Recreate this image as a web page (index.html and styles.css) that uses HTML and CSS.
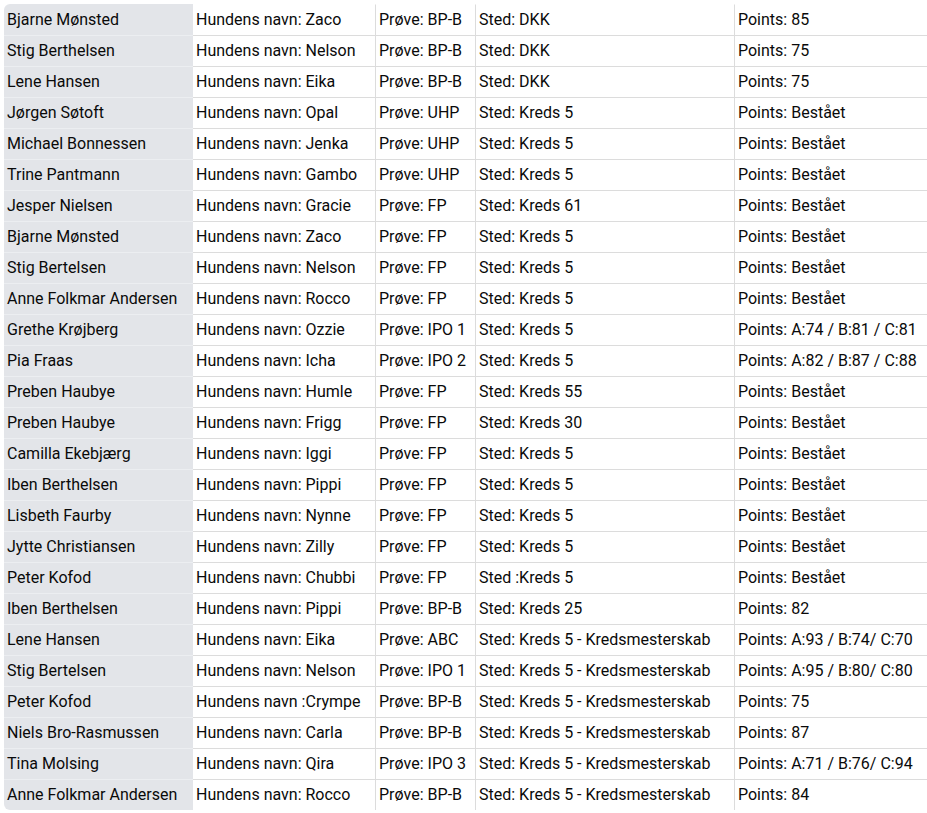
FILE: index.html
```html
<!DOCTYPE html>
<html lang="da">
<head>
<meta charset="utf-8">
<link rel="stylesheet" href="styles.css">
</head>
<body>
<table class="results">
<tbody>
<tr><td class="name">Bjarne Mønsted</td><td>Hundens navn: Zaco</td><td>Prøve: BP-B</td><td>Sted: DKK</td><td>Points: 85</td></tr>
<tr><td class="name">Stig Berthelsen</td><td>Hundens navn: Nelson</td><td>Prøve: BP-B</td><td>Sted: DKK</td><td>Points: 75</td></tr>
<tr><td class="name">Lene Hansen</td><td>Hundens navn: Eika</td><td>Prøve: BP-B</td><td>Sted: DKK</td><td>Points: 75</td></tr>
<tr><td class="name">Jørgen Søtoft</td><td>Hundens navn: Opal</td><td>Prøve: UHP</td><td>Sted: Kreds 5</td><td>Points: Bestået</td></tr>
<tr><td class="name">Michael Bonnessen</td><td>Hundens navn: Jenka</td><td>Prøve: UHP</td><td>Sted: Kreds 5</td><td>Points: Bestået</td></tr>
<tr><td class="name">Trine Pantmann</td><td>Hundens navn: Gambo</td><td>Prøve: UHP</td><td>Sted: Kreds 5</td><td>Points: Bestået</td></tr>
<tr><td class="name">Jesper Nielsen</td><td>Hundens navn: Gracie</td><td>Prøve: FP</td><td>Sted: Kreds 61</td><td>Points: Bestået</td></tr>
<tr><td class="name">Bjarne Mønsted</td><td>Hundens navn: Zaco</td><td>Prøve: FP</td><td>Sted: Kreds 5</td><td>Points: Bestået</td></tr>
<tr><td class="name">Stig Bertelsen</td><td>Hundens navn: Nelson</td><td>Prøve: FP</td><td>Sted: Kreds 5</td><td>Points: Bestået</td></tr>
<tr><td class="name">Anne Folkmar Andersen</td><td>Hundens navn: Rocco</td><td>Prøve: FP</td><td>Sted: Kreds 5</td><td>Points: Bestået</td></tr>
<tr><td class="name">Grethe Krøjberg</td><td>Hundens navn: Ozzie</td><td>Prøve: IPO 1</td><td>Sted: Kreds 5</td><td>Points: A:74 / B:81 / C:81</td></tr>
<tr><td class="name">Pia Fraas</td><td>Hundens navn: Icha</td><td>Prøve: IPO 2</td><td>Sted: Kreds 5</td><td>Points: A:82 / B:87 / C:88</td></tr>
<tr><td class="name">Preben Haubye</td><td>Hundens navn: Humle</td><td>Prøve: FP</td><td>Sted: Kreds 55</td><td>Points: Bestået</td></tr>
<tr><td class="name">Preben Haubye</td><td>Hundens navn: Frigg</td><td>Prøve: FP</td><td>Sted: Kreds 30</td><td>Points: Bestået</td></tr>
<tr><td class="name">Camilla Ekebjærg</td><td>Hundens navn: Iggi</td><td>Prøve: FP</td><td>Sted: Kreds 5</td><td>Points: Bestået</td></tr>
<tr><td class="name">Iben Berthelsen</td><td>Hundens navn: Pippi</td><td>Prøve: FP</td><td>Sted: Kreds 5</td><td>Points: Bestået</td></tr>
<tr><td class="name">Lisbeth Faurby</td><td>Hundens navn: Nynne</td><td>Prøve: FP</td><td>Sted: Kreds 5</td><td>Points: Bestået</td></tr>
<tr><td class="name">Jytte Christiansen</td><td>Hundens navn: Zilly</td><td>Prøve: FP</td><td>Sted: Kreds 5</td><td>Points: Bestået</td></tr>
<tr><td class="name">Peter Kofod</td><td>Hundens navn: Chubbi</td><td>Prøve: FP</td><td>Sted :Kreds 5</td><td>Points: Bestået</td></tr>
<tr><td class="name">Iben Berthelsen</td><td>Hundens navn: Pippi</td><td>Prøve: BP-B</td><td>Sted: Kreds 25</td><td>Points: 82</td></tr>
<tr><td class="name">Lene Hansen</td><td>Hundens navn: Eika</td><td>Prøve: ABC</td><td>Sted: Kreds 5 - Kredsmesterskab</td><td>Points: A:93 / B:74/ C:70</td></tr>
<tr><td class="name">Stig Bertelsen</td><td>Hundens navn: Nelson</td><td>Prøve: IPO 1</td><td>Sted: Kreds 5 - Kredsmesterskab</td><td>Points: A:95 / B:80/ C:80</td></tr>
<tr><td class="name">Peter Kofod</td><td>Hundens navn :Crympe</td><td>Prøve: BP-B</td><td>Sted: Kreds 5 - Kredsmesterskab</td><td>Points: 75</td></tr>
<tr><td class="name">Niels Bro-Rasmussen</td><td>Hundens navn: Carla</td><td>Prøve: BP-B</td><td>Sted: Kreds 5 - Kredsmesterskab</td><td>Points: 87</td></tr>
<tr><td class="name">Tina Molsing</td><td>Hundens navn: Qira</td><td>Prøve: IPO 3</td><td>Sted: Kreds 5 - Kredsmesterskab</td><td>Points: A:71 / B:76/ C:94</td></tr>
<tr><td class="name">Anne Folkmar Andersen</td><td>Hundens navn: Rocco</td><td>Prøve: BP-B</td><td>Sted: Kreds 5 - Kredsmesterskab</td><td>Points: 84</td></tr>
</tbody>
</table>
</body>
</html>
```

FILE: styles.css
```css
html, body {
  margin: 0;
  padding: 0;
  background: #fff;
}

body {
  padding: 4px 0 0 4px;
  font-family: Roboto, "Liberation Sans", sans-serif;
  font-size: 16px;
  color: #0a0a0a;
}

.results {
  border-collapse: separate;
  border-spacing: 0;
  table-layout: fixed;
  width: 923px;
}

.results td {
  height: 31px;
  padding: 0 3px;
  border-top: 1px solid #dcdcdc;
  border-left: 1px solid #dcdcdc;
  vertical-align: middle;
  white-space: nowrap;
  box-sizing: border-box;
  line-height: 30px;
}

.results tr:first-child td {
  border-top-color: transparent;
}

.results td:nth-child(1) { width: 189px; }
.results td:nth-child(2) { width: 182px; border-left: none; }
.results td:nth-child(3) { width: 100px; }
.results td:nth-child(4) { width: 259px; }
.results td:nth-child(5) { width: 193px; }

.results td.name {
  background: #e3e5e9;
  border-left: none;
  border-top-color: #eceef1;
}

.results tr:first-child td.name {
  border-top-color: transparent;
  border-top-left-radius: 6px;
}
.results tr:last-child td.name { border-bottom-left-radius: 6px; }
```
